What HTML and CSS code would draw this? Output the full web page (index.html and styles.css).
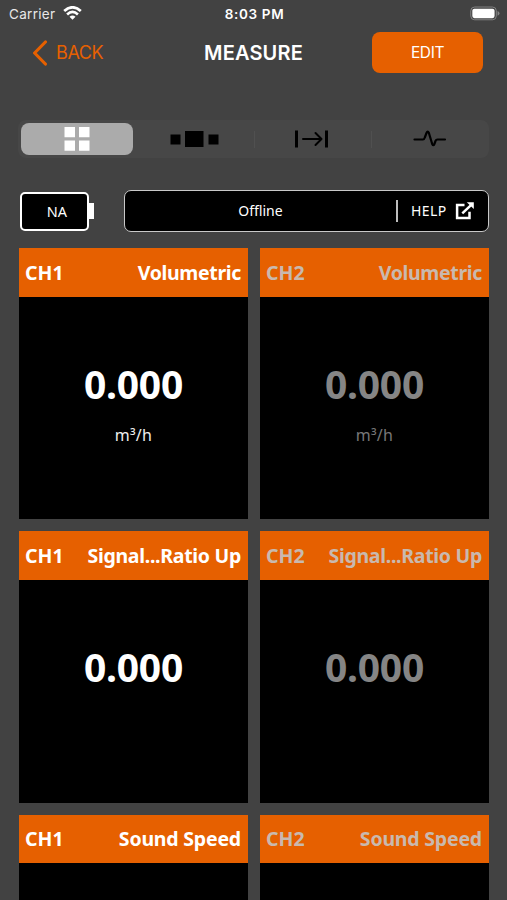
FILE: index.html
```html
<!DOCTYPE html>
<html lang="en">
<head>
<meta charset="utf-8">
<title>Measure</title>
<link rel="stylesheet" href="styles.css">
</head>
<body>
<div class="screen">
  <div class="status">
    <div class="carrier"><span class="carrier-name">Carrier</span>
      <svg class="wifi" width="19" height="14" viewBox="0 0 19 14" fill="none" stroke="#fff" stroke-width="2.7"><path d="M1.2 5.1Q9.5-2.500 17.800 5.1M4.1 8.4Q9.500 3.500 14.900 8.4"/><path d="M6.500 10.700Q9.500 8.200 12.500 10.700L9.500 13.700Z" fill="#fff" stroke="none"/></svg>
    </div>
    <div class="time">8:03 PM</div>
    <svg class="power" width="30" height="15" viewBox="0 0 31 15"><rect x=".8" y=".8" width="26.4" height="13.2" rx="4" fill="none" stroke="#858585"/><rect x="2.4" y="2.5" width="23" height="9.8" rx="2.2" fill="#fff"/><path d="M28.500 5q2 .8 2 2.400t-2 2.400Z" fill="#858585"/></svg>
  </div>
  <header class="nav">
    <div class="back"><svg width="16" height="26" viewBox="0 0 16 26" fill="none" stroke="#e66000" stroke-width="3.2" stroke-linecap="round" stroke-linejoin="round"><path d="M13.4 2L2.6 13L13.4 24"/></svg><span>BACK</span></div>
    <h1>MEASURE</h1>
    <button class="edit">EDIT</button>
  </header>
  <nav class="tabs">
    <div class="tab active"><svg width="26" height="26" viewBox="0 0 26 26" fill="#fff"><path d="M.5 1h10.500v10.300H.5zM15 1h10.500v10.300H15zM.5 14.500h10.500v10.300H.5zM15 14.500h10.500v10.300H15z"/></svg></div>
    <div class="tab"><svg width="49" height="18" viewBox="0 0 49 18"><path d="M.5 4.500h10v10h-10zM15 1h18.500v16H15zM38.500 4.500h10v10h-10z"/></svg></div>
    <div class="tab divided"><svg width="34" height="18" viewBox="0 0 34 18" fill="none" stroke="#000" stroke-width="2"><path d="M1.500 .5v17M31.500 .5v17" stroke-width="3"/><path d="M8 9h18.500M20.500 3l6 6-6 6" stroke-linecap="round" stroke-linejoin="round"/></svg></div>
    <div class="tab divided"><svg width="34" height="18" viewBox="0 0 34 18" fill="none" stroke="#000" stroke-width="2.2" stroke-linecap="round" stroke-linejoin="round"><path d="M1.500 9.500H10Q11.200 9.500 11.800 7.500L13.500 3Q14.700 .3 15.900 3L19.200 14Q20.300 16.500 21.400 14L22.500 11Q23 9.500 24.500 9.500H32"/></svg></div>
  </nav>
  <div class="info">
    <div class="battery"><div class="cell">NA</div><div class="tip"></div></div>
    <div class="connection">
      <span class="state">Offline</span>
      <span class="rule"></span>
      <span class="help">HELP</span>
      <svg width="20" height="18" viewBox="0 0 20 18" fill="none" stroke="#fff" stroke-width="2.500"><path d="M9.500 3H2.100V15.900H14.500V9.800"/><path d="M7.300 11.300L16 3.100"/><path d="M11.800 .2H18.800V7Z" fill="#fff" stroke="none"/></svg>
    </div>
  </div>
  <main class="grid">
    <section class="card"><h2><span>CH1</span><span class="volumetric">Volumetric</span></h2><div class="value">0.000</div><div class="unit">m³/h</div></section>
    <section class="card dim"><h2><span>CH2</span><span class="volumetric">Volumetric</span></h2><div class="value">0.000</div><div class="unit">m³/h</div></section>
    <section class="card"><h2><span>CH1</span><span class="signal">Signal...Ratio Up</span></h2><div class="value">0.000</div></section>
    <section class="card dim"><h2><span>CH2</span><span class="signal">Signal...Ratio Up</span></h2><div class="value">0.000</div></section>
    <section class="card"><h2><span>CH1</span><span class="sound">Sound Speed</span></h2></section>
    <section class="card dim"><h2><span>CH2</span><span class="sound">Sound Speed</span></h2></section>
  </main>
</div>
</body>
</html>
```
FILE: styles.css
```css
* { box-sizing: border-box; }
body { margin: 0; background: #424242; }
svg { display: block; flex: none; }
.screen {
  width: 507px;
  height: 900px;
  overflow: hidden;
  background: #424242;
  color: #fff;
  font-family: "Noto Sans", sans-serif;
}
.status {
  display: grid;
  grid-template-columns: 1fr auto 1fr;
  align-items: center;
  height: 28px;
  padding: 0 7px 0 9px;
  font: 13.5px/16px Inter, sans-serif;
}
.carrier { display: flex; align-items: center; gap: 8px; color: #e8e8e8; }
.carrier-name { letter-spacing: .3px; }
.wifi { margin-top: -2px; }
.time { font-weight: 600; font-size: 13.5px; letter-spacing: .65px; }
.power { justify-self: end; margin-top: -1px; }
.nav {
  display: grid;
  grid-template-columns: 1fr auto 1fr;
  align-items: center;
  height: 49px;
  padding: 0 24px 0 24px;
  font-family: Inter, sans-serif;
}
.back { display: flex; align-items: center; gap: 8px; padding-left: 8px; color: #e66000; font-size: 18px; letter-spacing: -.4px; }
.nav h1 { margin: 0; font-size: 20px; font-weight: 600; letter-spacing: .15px; }
.edit {
  justify-self: end;
  width: 111px;
  height: 41px;
  border: 0;
  border-radius: 8px;
  background: #e66000;
  color: #fff;
  font: 15.5px Inter, sans-serif;
  letter-spacing: -.4px;
}
.tabs {
  display: grid;
  grid-template-columns: repeat(4, 1fr);
  height: 38px;
  margin: 43px 18px 0;
  padding: 3px 0;
  border-radius: 8px;
  background: #474747;
}
.tab { display: flex; align-items: center; justify-content: center; }
.tab.active { margin: 0 3px; border-radius: 8px; background: #ababab; }
.tab.divided {
  background: linear-gradient(#505050, #505050) 0 50% / 1px 17px no-repeat;
}
.info { display: flex; justify-content: space-between; align-items: center; height: 42px; margin: 32px 18px 0 20px; }
.battery { display: flex; align-items: center; }
.cell {
  display: flex;
  align-items: center;
  justify-content: center;
  width: 69px;
  height: 39px;
  padding-left: 5px;
  border: 2px solid #fff;
  border-radius: 5px;
  background: #000;
  font-size: 14.5px;
}
.tip { width: 5px; height: 16px; background: #fff; }
.connection {
  display: flex;
  align-items: center;
  width: 365px;
  height: 42px;
  padding-right: 13px;
  border: 1.5px solid #c9c9c9;
  border-radius: 7px;
  background: #000;
  font-size: 14px;
}
.cell, .state, .help { line-height: 18px; }
.state, .help { margin-top: -1px; }
.state { flex: 1; text-align: center; }
.rule { width: 2px; height: 22px; margin-right: 13px; background: #bdbdbd; }
.help { width: 36px; margin-right: 8px; letter-spacing: .4px; }
.grid {
  display: grid;
  grid-template-columns: 229px 229px;
  grid-auto-rows: 271.3px;
  gap: 12px;
  margin: 16px 18px 0 19px;
}
.card { background: #000; text-align: center; }
.card h2 {
  display: flex;
  align-items: center;
  justify-content: space-between;
  height: 48.5px;
  margin: 0;
  padding: 0 7px 0 6px;
  background: #e66000;
  font-size: 19.5px;
  line-height: 27px;
}
.volumetric { letter-spacing: -.35px; }
.signal { letter-spacing: -.3px; }
.sound { letter-spacing: -.2px; }
.value { margin-top: 61px; font-size: 39px; font-weight: 700; line-height: 51px; letter-spacing: -.2px; }
.unit { margin-top: 15px; font-size: 16px; line-height: 22px; letter-spacing: .3px; color: #eee; }
.dim h2 { color: #c9b9ae; }
.dim .value { color: #858585; }
.dim .unit { color: #777; }
```
